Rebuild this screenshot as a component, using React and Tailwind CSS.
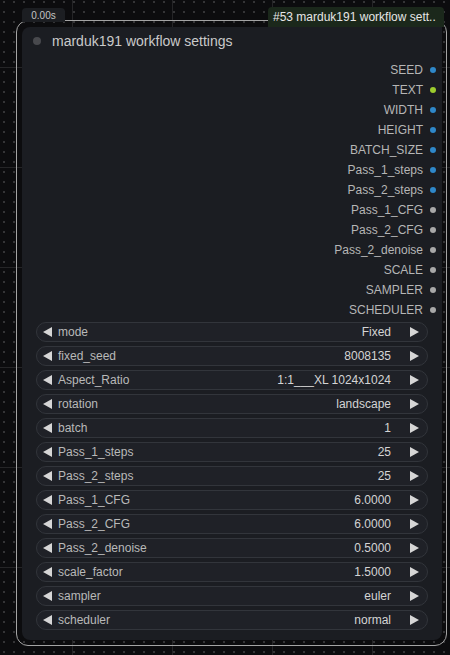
// ComfyUI-style node: marduk191 workflow settings
import React from 'react';

const OUTPUTS = [
  { name: 'SEED', color: 'bg-[#2f88c9]' },
  { name: 'TEXT', color: 'bg-[#9ccc2e]' },
  { name: 'WIDTH', color: 'bg-[#2f88c9]' },
  { name: 'HEIGHT', color: 'bg-[#2f88c9]' },
  { name: 'BATCH_SIZE', color: 'bg-[#2f88c9]' },
  { name: 'Pass_1_steps', color: 'bg-[#2f88c9]' },
  { name: 'Pass_2_steps', color: 'bg-[#2f88c9]' },
  { name: 'Pass_1_CFG', color: 'bg-[#a8a8a8]' },
  { name: 'Pass_2_CFG', color: 'bg-[#a8a8a8]' },
  { name: 'Pass_2_denoise', color: 'bg-[#a8a8a8]' },
  { name: 'SCALE', color: 'bg-[#a8a8a8]' },
  { name: 'SAMPLER', color: 'bg-[#a8a8a8]' },
  { name: 'SCHEDULER', color: 'bg-[#a8a8a8]' },
];

const WIDGETS = [
  ['mode', 'Fixed'],
  ['fixed_seed', '8008135'],
  ['Aspect_Ratio', '1:1___XL 1024x1024'],
  ['rotation', 'landscape'],
  ['batch', '1'],
  ['Pass_1_steps', '25'],
  ['Pass_2_steps', '25'],
  ['Pass_1_CFG', '6.0000'],
  ['Pass_2_CFG', '6.0000'],
  ['Pass_2_denoise', '0.5000'],
  ['scale_factor', '1.5000'],
  ['sampler', 'euler'],
  ['scheduler', 'normal'],
];

function Arrow({ dir }) {
  return (
    <svg width="9" height="10" viewBox="0 0 9 10" className="shrink-0">
      {dir === 'left' ? (
        <polygon points="9,0 9,10 0,5" fill="#d6d6d6" />
      ) : (
        <polygon points="0,0 0,10 9,5" fill="#d6d6d6" />
      )}
    </svg>
  );
}

function Widget({ label, value }) {
  return (
    <div className="flex h-[20px] items-center rounded-full border border-[#32353b] bg-[#1f2127] pl-[6px] pr-[8px] text-[12px]">
      <Arrow dir="left" />
      <span className="ml-[6px] text-[#b9b9b9]">{label}</span>
      <span className="ml-auto text-[#d4d4d4]">{value}</span>
      <span className="ml-[19px]">
        <Arrow dir="right" />
      </span>
    </div>
  );
}

export default function App() {
  return (
    <div className="relative h-[655px] w-[450px] overflow-hidden bg-[#0c0c0e] font-['Liberation_Sans',Arial,sans-serif]">
      {/* canvas grid */}
      <div className="absolute inset-0 bg-[image:radial-gradient(circle,#343436_0.9px,transparent_1.2px)] bg-[length:10px_10px] bg-[position:-1px_-3px]" />
      <div className="absolute inset-0 bg-[image:linear-gradient(to_right,#252527_1px,transparent_1px),linear-gradient(to_bottom,#252527_1px,transparent_1px)] bg-[length:100px_100px] bg-[position:72px_67px]" />

      {/* selection outline */}
      <div className="absolute left-[16px] top-[20px] h-[626px] w-[431px] rounded-[12px] border border-[#a4a4a4]" />

      {/* execution time tab */}
      <div className="absolute left-[22px] top-[8px] flex h-[14px] w-[43px] items-center justify-center rounded-t-[4px] bg-[#1c1e22] text-[10px] text-[#c4c4c4]">
        0.00s
      </div>

      {/* node id tag */}
      <div className="absolute left-[268px] top-[7px] flex h-[20px] w-[176px] items-center rounded-t-[4px] bg-[#1b281b] pl-[5px] text-[12px] text-[#e6e6e6]">
        #53 marduk191 workflow sett..
      </div>

      {/* node */}
      <div className="absolute left-[22px] top-[27px] flex h-[613px] w-[420px] flex-col rounded-b-[8px] rounded-tl-[8px] bg-[#1b1d22]">
        <div className="flex h-[28px] shrink-0 items-center pl-[11px]">
          <div className="h-[8px] w-[8px] rounded-full bg-[#48494d]" />
          <span className="ml-[11px] text-[14px] text-[#cacaca]">marduk191 workflow settings</span>
        </div>

        <div className="mt-[5px] flex flex-col">
          {OUTPUTS.map((o) => (
            <div key={o.name} className="flex h-[20px] items-center justify-end pr-[6px]">
              <span className="text-[12px] text-[#b6b6b6]">{o.name}</span>
              <span className={`ml-[7px] h-[6px] w-[6px] rounded-full ${o.color}`} />
            </div>
          ))}
        </div>

        <div className="mx-[14px] mt-[2px] flex flex-col gap-[4px]">
          {WIDGETS.map(([l, v]) => (
            <Widget key={l} label={l} value={v} />
          ))}
        </div>
      </div>
    </div>
  );
}
